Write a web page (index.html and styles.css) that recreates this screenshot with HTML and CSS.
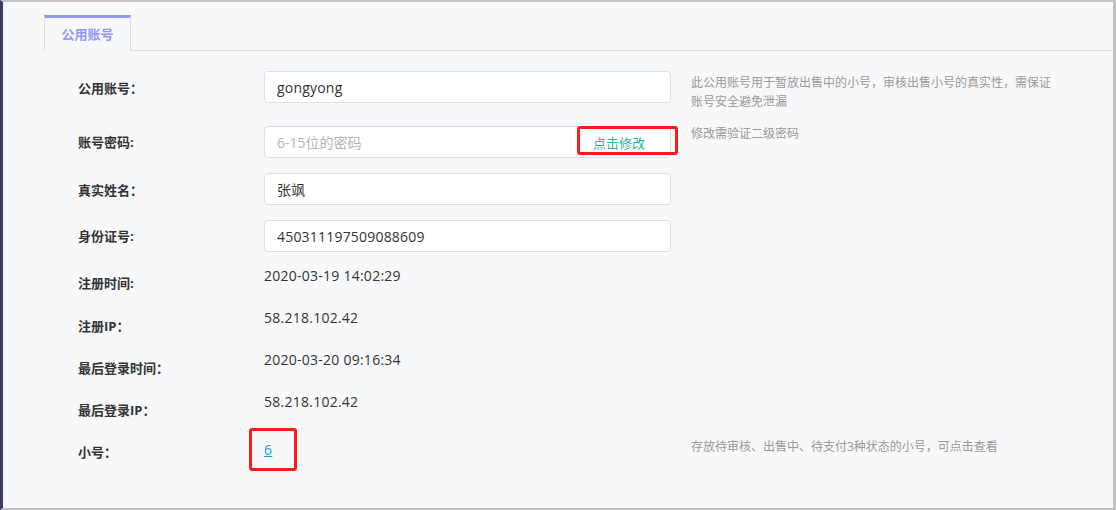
FILE: index.html
```html
<!DOCTYPE html>
<html lang="zh-CN">
<head>
    <meta charset="UTF-8">
    <meta name="viewport" content="width=device-width, initial-scale=1.0">
    <title>公用账号</title>
    <link rel="stylesheet" href="styles.css">
</head>
<body>
    <div class="page">
        <div class="tabs">
            <div class="tab active">公用账号</div>
        </div>

        <div class="form">
            <div class="row">
                <div class="label">公用账号<span class="colon">：</span></div>
                <input class="input" type="text" value="gongyong">
                <div class="hint">此公用账号用于暂放出售中的小号，审核出售小号的真实性，需保证账号安全避免泄漏</div>
            </div>

            <div class="row">
                <div class="label">账号密码:</div>
                <div class="field">
                    <input class="field-input" type="password" placeholder="6-15位的密码">
                    <button class="field-btn">点击修改</button>
                    <span class="mark mark-btn"></span>
                </div>
                <div class="hint hint-up">修改需验证二级密码</div>
            </div>

            <div class="row">
                <div class="label">真实姓名<span class="colon">：</span></div>
                <input class="input" type="text" value="张飒">
            </div>

            <div class="row">
                <div class="label">身份证号:</div>
                <input class="input" type="text" value="450311197509088609">
            </div>

            <div class="row row-text">
                <div class="label">注册时间:</div>
                <div class="value">2020-03-19 14:02:29</div>
            </div>

            <div class="row row-text">
                <div class="label">注册IP<span class="colon">：</span></div>
                <div class="value">58.218.102.42</div>
            </div>

            <div class="row row-text">
                <div class="label">最后登录时间<span class="colon">：</span></div>
                <div class="value">2020-03-20 09:16:34</div>
            </div>

            <div class="row row-text">
                <div class="label">最后登录IP<span class="colon">：</span></div>
                <div class="value">58.218.102.42</div>
            </div>

            <div class="row row-text">
                <div class="label">小号<span class="colon">：</span></div>
                <div class="value value-link">
                    <a href="#">6</a>
                    <span class="mark mark-link"></span>
                </div>
                <div class="hint">存放待审核、出售中、待支付3种状态的小号，可点击查看</div>
            </div>
        </div>
    </div>
</body>
</html>
```

FILE: styles.css
```css
* {
    box-sizing: border-box;
}

body {
    margin: 0;
    font-family: 'Open Sans', 'Noto Sans CJK SC', sans-serif;
    color: #333;
}

.page {
    height: 510px;
    background-color: #f7f8fa;
    border-top: 2px solid #c6c6c6;
    border-left: 3px solid #3b3b6b;
    border-right: 3px solid #c0c0c0;
    border-bottom: 2px solid #c0c0c0;
    padding-top: 13px;
}

/* tabs */
.tabs {
    display: flex;
    height: 36px;
    margin-left: 41px;
    border-bottom: 1px solid #dcdcdc;
}

.tab {
    position: relative;
    width: 87px;
    height: 36px;
    margin-bottom: -1px;
    border: 1px solid #dcdcdc;
    border-top: 3px solid #9297f0;
    border-bottom: none;
    background-color: #f7f8fa;
    color: #9297f0;
    font-size: 13px;
    font-weight: bold;
    text-align: center;
    line-height: 32px;
}

/* form */
.form {
    padding: 20px 0 0 75px;
}

.row {
    display: flex;
    align-items: flex-start;
    margin-bottom: 15px;
}

.row-text {
    margin-bottom: 10px;
}

.label {
    width: 186px;
    height: 32px;
    flex-shrink: 0;
    font-size: 13px;
    font-weight: bold;
    line-height: 33px;
    color: #333;
}

/* centred full-width colon, as the original font draws it */
.colon {
    font-family: 'Noto Sans CJK TC', sans-serif;
}

.input,
.field {
    width: 407px;
    height: 32px;
    flex-shrink: 0;
    border: 1px solid #dcdfe6;
    border-radius: 4px;
    background-color: #fff;
}

.input {
    padding: 0 12px;
    font-family: inherit;
    font-size: 14px;
    letter-spacing: 0.2px;
    color: #333;
    outline: none;
}

.field {
    position: relative;
    display: flex;
    align-items: center;
}

.field-input {
    flex: 1;
    min-width: 0;
    height: 100%;
    padding: 0 12px;
    border: none;
    background: transparent;
    font-family: inherit;
    font-size: 14px;
    outline: none;
}

.field-input::placeholder {
    color: #b4b4b4;
}

.field-btn {
    padding: 0 25px 0 0;
    border: none;
    background: none;
    font-family: inherit;
    font-size: 13px;
    color: #1fb5a0;
    cursor: pointer;
}

.hint {
    width: 370px;
    margin-left: 20px;
    padding-top: 2px;
    font-size: 12px;
    line-height: 19px;
    color: #999;
}

.hint-up {
    margin-top: -4px;
}

.value {
    width: 407px;
    flex-shrink: 0;
    font-size: 14px;
    line-height: 18px;
    letter-spacing: 0.25px;
    color: #333;
}

.value-link {
    position: relative;
    padding-top: 6px;
}

.value-link a {
    color: #1a9be0;
    text-decoration: underline;
}

/* red annotation boxes */
.mark {
    position: absolute;
    border: 3px solid #fa1c1c;
    border-radius: 3px;
    pointer-events: none;
}

.mark-btn {
    left: 312px;
    top: -1px;
    width: 101px;
    height: 29px;
}

.mark-link {
    left: -15px;
    top: -7px;
    width: 48px;
    height: 43px;
}
```
